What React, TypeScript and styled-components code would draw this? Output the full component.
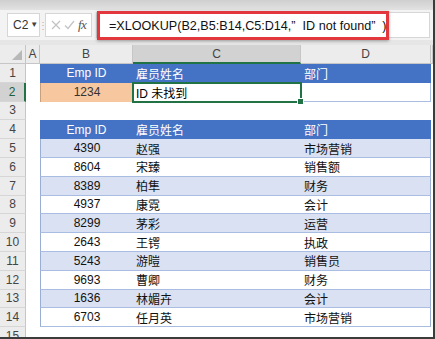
import React from 'react';
import styled, { createGlobalStyle, css } from 'styled-components';

const Global = createGlobalStyle`
  html, body { margin: 0; padding: 0; background: #ffffff; }
  body { font-family: "Liberation Sans", "Noto Sans CJK SC", sans-serif; }
  * { box-sizing: border-box; }
`;

const COLS = '26px 14px 93px 168px 130px 1fr';
const ROW_H = 18.8;

const Frame = styled.div`
  width: 435px;
  height: 339px;
  overflow: hidden;
  background: #e6e6e6;
  border-right: 2px solid #3c3c3c;
  border-bottom: 2px solid #3c3c3c;
  display: flex;
  flex-direction: column;
`;

const TopBand = styled.div`
  height: 10px;
  flex: none;
  background: linear-gradient(#cfcfcf, #e2e2e2);
`;

const FormulaRow = styled.div`
  height: 30px;
  flex: none;
  display: flex;
  align-items: center;
  padding-left: 7px;
  background: #f3f3f3;
`;

const NameBox = styled.div`
  width: 33px;
  height: 24px;
  background: #ffffff;
  border: 1px solid #d6d6d6;
  display: flex;
  align-items: center;
  padding-left: 5px;
  gap: 2px;
  font-size: 12px;
  color: #333;
`;

const Caret = styled.span`
  font-size: 8px;
  color: #444;
  margin-top: -2px;
`;

const Dots = styled.div`
  width: 5px;
  height: 24px;
  display: flex;
  justify-content: center;
  align-items: center;
  color: #b5b5b5;
  font-size: 10px;
`;

const FxBox = styled.div`
  width: 47px;
  height: 24px;
  background: #ffffff;
  border: 1px solid #d6d6d6;
  display: flex;
  align-items: center;
  justify-content: space-around;
  padding: 0 3px;
`;

const FxText = styled.span`
  font-family: "Liberation Serif", serif;
  font-style: italic;
  font-size: 13px;
  color: #555;
  letter-spacing: -0.5px;
`;

const FormulaField = styled.div`
  flex: 1;
  height: 26px;
  margin-left: 4px;
  margin-right: 3px;
  background: #ffffff;
  border: 1px solid #d6d6d6;
  display: flex;
  align-items: center;
  position: relative;
`;

const Highlight = styled.div`
  position: absolute;
  left: 0;
  top: -2px;
  width: 292px;
  height: 29px;
  border: 3px solid #e2383d;
  box-shadow: 0 1px 3px rgba(0, 0, 0, 0.35);
  background: #ffffff;
  display: flex;
  align-items: center;
  padding-left: 9px;
  font-size: 12.6px;
  color: #111;
  white-space: pre;
`;

const Gap = styled.div`
  height: 5px;
  flex: none;
  background: #e6e6e6;
`;

const Sheet = styled.div`
  flex: 1;
  background: #ffffff;
  display: flex;
  flex-direction: column;
`;

const Row = styled.div<{ $h: number }>`
  display: grid;
  grid-template-columns: ${COLS};
  height: ${(p) => p.$h}px;
  flex: none;
`;

const ColHead = styled.div<{ $sel?: boolean }>`
  background: ${(p) => (p.$sel ? '#d2d2d2' : '#ececec')};
  border-right: 1px solid #c6c6c6;
  border-bottom: ${(p) => (p.$sel ? '2px solid #217346' : '1px solid #c6c6c6')};
  display: flex;
  align-items: center;
  justify-content: center;
  font-size: 12px;
  color: #444;
`;

const Corner = styled(ColHead)`
  position: relative;
  &::after {
    content: '';
    position: absolute;
    right: 3px;
    bottom: 3px;
    width: 0;
    height: 0;
    border-left: 10px solid transparent;
    border-bottom: 10px solid #b8b8b8;
  }
`;

const RowHead = styled.div<{ $sel?: boolean }>`
  background: ${(p) => (p.$sel ? '#d2d2d2' : '#ececec')};
  border-right: ${(p) => (p.$sel ? '2px solid #217346' : '1px solid #c6c6c6')};
  border-bottom: 1px solid #d6d6d6;
  display: flex;
  align-items: center;
  justify-content: center;
  font-size: 12px;
  color: ${(p) => (p.$sel ? '#1e5e3a' : '#444')};
`;

type Tone = 'head' | 'band' | 'plain' | 'orange' | 'empty' | 'open';

const toneStyles: Record<Tone, ReturnType<typeof css>> = {
  head: css`
    background: #4472c4;
    color: #ffffff;
  `,
  band: css`
    background: #d9e1f2;
    color: #111;
    border-bottom: 1px solid #a9bde3;
  `,
  plain: css`
    background: #ffffff;
    color: #111;
    border-bottom: 1px solid #a9bde3;
  `,
  orange: css`
    background: #f7c79f;
    color: #333;
    border-left: 1px solid #c9a07e;
  `,
  empty: css`
    background: #ffffff;
  `,
  open: css`
    background: #ffffff;
    border-right: 1px solid #a9bde3;
    border-bottom: 1px solid #a9bde3;
  `,
};

const Cell = styled.div<{ $tone: Tone; $center?: boolean; $edgeL?: boolean; $edgeR?: boolean; $sel?: boolean }>`
  display: flex;
  align-items: center;
  justify-content: ${(p) => (p.$center ? 'center' : 'flex-start')};
  padding-left: ${(p) => (p.$center ? '0' : '3px')};
  font-size: 12px;
  white-space: nowrap;
  position: relative;
  ${(p) => toneStyles[p.$tone]}
  ${(p) =>
    p.$edgeL &&
    css`
      border-left: 1px solid #9aaed3;
    `}
  ${(p) =>
    p.$edgeR &&
    css`
      border-right: 1px solid #9aaed3;
    `}
  ${(p) =>
    p.$sel &&
    css`
      outline: 2px solid #217346;
      outline-offset: -1px;
      z-index: 2;
      &::after {
        content: '';
        position: absolute;
        right: -3px;
        bottom: -3px;
        width: 5px;
        height: 5px;
        background: #217346;
        border: 1px solid #ffffff;
      }
    `}
`;

const rows: [string, string, string][] = [
  ['4390', '赵强', '市场营销'],
  ['8604', '宋臻', '销售额'],
  ['8389', '柏隼', '财务'],
  ['4937', '康霓', '会计'],
  ['8299', '茅彩', '运营'],
  ['2643', '王锷', '执政'],
  ['5243', '游暟', '销售员'],
  ['9693', '曹卿', '财务'],
  ['1636', '林媚卉', '会计'],
  ['6703', '任月英', '市场营销'],
];

const XIcon = () => (
  <svg width="10" height="10" viewBox="0 0 10 10">
    <path d="M1 1 L9 9 M9 1 L1 9" stroke="#c4c4c4" strokeWidth="1.3" fill="none" />
  </svg>
);

const CheckIcon = () => (
  <svg width="11" height="10" viewBox="0 0 11 10">
    <path d="M1 5.5 L4 8.5 L10 1" stroke="#c4c4c4" strokeWidth="1.3" fill="none" />
  </svg>
);

export default function App() {
  return (
    <>
      <Global />
      <Frame>
        <TopBand />
        <FormulaRow>
          <NameBox>
            C2<Caret>▼</Caret>
          </NameBox>
          <Dots>⋮</Dots>
          <FxBox>
            <XIcon />
            <CheckIcon />
            <FxText>fx</FxText>
          </FxBox>
          <FormulaField>
            <Highlight>{'=XLOOKUP(B2,B5:B14,C5:D14,”  ID not found”  )'}</Highlight>
          </FormulaField>
        </FormulaRow>
        <Gap />
        <Sheet>
          <Row $h={19}>
            <Corner />
            <ColHead>A</ColHead>
            <ColHead>B</ColHead>
            <ColHead $sel>C</ColHead>
            <ColHead>D</ColHead>
            <ColHead />
          </Row>
          <Row $h={ROW_H}>
            <RowHead>1</RowHead>
            <Cell $tone="empty" />
            <Cell $tone="head" $center>Emp ID</Cell>
            <Cell $tone="head">雇员姓名</Cell>
            <Cell $tone="head">部门</Cell>
            <Cell $tone="empty" />
          </Row>
          <Row $h={ROW_H}>
            <RowHead $sel>2</RowHead>
            <Cell $tone="empty" />
            <Cell $tone="orange" $center>1234</Cell>
            <Cell $tone="empty" $sel>ID 未找到</Cell>
            <Cell $tone="open" />
            <Cell $tone="empty" />
          </Row>
          <Row $h={ROW_H}>
            <RowHead>3</RowHead>
            <Cell $tone="empty" />
            <Cell $tone="empty" />
            <Cell $tone="empty" />
            <Cell $tone="empty" />
            <Cell $tone="empty" />
          </Row>
          <Row $h={ROW_H}>
            <RowHead>4</RowHead>
            <Cell $tone="empty" />
            <Cell $tone="head" $center>Emp ID</Cell>
            <Cell $tone="head">雇员姓名</Cell>
            <Cell $tone="head">部门</Cell>
            <Cell $tone="empty" />
          </Row>
          {rows.map(([id, name, dept], i) => {
            const tone: Tone = i % 2 === 0 ? 'band' : 'plain';
            return (
              <Row $h={ROW_H} key={id}>
                <RowHead>{i + 5}</RowHead>
                <Cell $tone="empty" />
                <Cell $tone={tone} $center $edgeL>{id}</Cell>
                <Cell $tone={tone}>{name}</Cell>
                <Cell $tone={tone} $edgeR>{dept}</Cell>
                <Cell $tone="empty" />
              </Row>
            );
          })}
          <Row $h={ROW_H}>
            <RowHead>15</RowHead>
            <Cell $tone="empty" />
            <Cell $tone="empty" />
            <Cell $tone="empty" />
            <Cell $tone="empty" />
            <Cell $tone="empty" />
          </Row>
        </Sheet>
      </Frame>
    </>
  );
}
